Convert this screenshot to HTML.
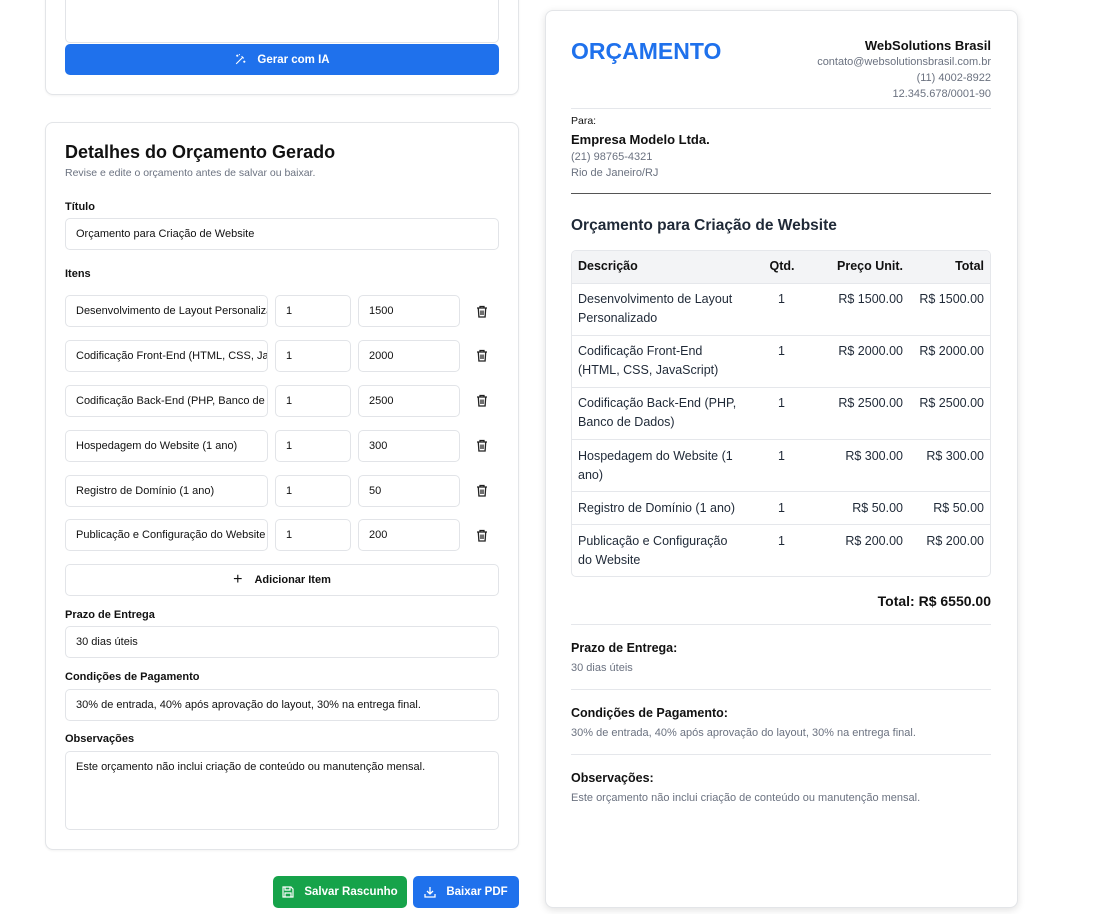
<!DOCTYPE html>
<html><head><meta charset="utf-8"><style>
*{box-sizing:border-box;margin:0;padding:0}
body{width:1097px;height:914px;background:#fff;font-family:"Liberation Sans",Arial,sans-serif;color:#111827;position:relative;overflow:hidden}
.a{position:absolute}
.card{position:absolute;background:#fff;border:1px solid #e3e5e8;border-radius:8px;box-shadow:0 1px 2px rgba(0,0,0,.05)}
.inp{position:absolute;border:1px solid #e2e4e8;border-radius:5px;background:#fff;font-size:11px;color:#111;padding-left:10px;display:flex;align-items:center;white-space:nowrap;overflow:hidden}
.lbl{position:absolute;font-size:11px;font-weight:bold;color:#111}
.tr{position:absolute;left:476px;width:12px;height:13px}
.btn{position:absolute;border-radius:5px;color:#fff;font-size:11.5px;font-weight:bold;display:flex;align-items:center;justify-content:center;gap:10px}
.t{position:absolute;font-size:12.5px;color:#1f2937;line-height:19px}
.r{text-align:right}
.hl{position:absolute;left:571px;width:420px;height:1px;background:#e5e7eb}
.sm{position:absolute;font-size:11px;color:#6b7280}
</style></head><body>

<div class="card" style="left:45px;top:-10px;width:474px;height:105px"></div>
<div class="a" style="left:65px;top:-5px;width:434px;height:48px;border:1px solid #e2e4e8;border-radius:5px"></div>
<div class="btn" style="left:65px;top:44px;width:434px;height:31px;background:#1f71ec"><svg width="13" height="13" viewBox="0 0 24 24" fill="none" stroke="#fff" stroke-width="2"><path d="M4 20L16 8M14 6l4 4M6 3v4M4 5h4M19 14v4M17 16h4M10 2v2"/></svg>Gerar com IA</div>

<div class="card" style="left:45px;top:122px;width:474px;height:728px"></div>
<div class="a" style="left:65px;top:142px;font-size:18px;font-weight:bold;color:#111">Detalhes do Orçamento Gerado</div>
<div class="a" style="left:65px;top:167px;font-size:10.5px;color:#6b7280">Revise e edite o orçamento antes de salvar ou baixar.</div>
<div class="lbl" style="left:65px;top:201px">Título</div>
<div class="inp" style="left:65px;top:218px;width:434px;height:32px">Orçamento para Criação de Website</div>
<div class="lbl" style="left:65px;top:268px">Itens</div>

<div class="inp" style="left:65px;top:295px;width:203px;height:32px">Desenvolvimento de Layout Personalizado</div>
<div class="inp" style="left:275px;top:295px;width:76px;height:32px">1</div>
<div class="inp" style="left:358px;top:295px;width:102px;height:32px">1500</div>
<div class="inp" style="left:65px;top:340px;width:203px;height:32px">Codificação Front-End (HTML, CSS, JavaScript)</div>
<div class="inp" style="left:275px;top:340px;width:76px;height:32px">1</div>
<div class="inp" style="left:358px;top:340px;width:102px;height:32px">2000</div>
<div class="inp" style="left:65px;top:385px;width:203px;height:32px">Codificação Back-End (PHP, Banco de Dados)</div>
<div class="inp" style="left:275px;top:385px;width:76px;height:32px">1</div>
<div class="inp" style="left:358px;top:385px;width:102px;height:32px">2500</div>
<div class="inp" style="left:65px;top:430px;width:203px;height:32px">Hospedagem do Website (1 ano)</div>
<div class="inp" style="left:275px;top:430px;width:76px;height:32px">1</div>
<div class="inp" style="left:358px;top:430px;width:102px;height:32px">300</div>
<div class="inp" style="left:65px;top:475px;width:203px;height:32px">Registro de Domínio (1 ano)</div>
<div class="inp" style="left:275px;top:475px;width:76px;height:32px">1</div>
<div class="inp" style="left:358px;top:475px;width:102px;height:32px">50</div>
<div class="inp" style="left:65px;top:519px;width:203px;height:32px">Publicação e Configuração do Website</div>
<div class="inp" style="left:275px;top:519px;width:76px;height:32px">1</div>
<div class="inp" style="left:358px;top:519px;width:102px;height:32px">200</div>

<svg class="tr" style="top:305px" viewBox="0 0 12 13" fill="none" stroke="#222" stroke-width="1.3"><path d="M1 3h10M4 3V1.5h4V3M2.3 3l.6 9h6.2l.6-9M5 5.5v4.5M7 5.5v4.5"/></svg>
<svg class="tr" style="top:349px" viewBox="0 0 12 13" fill="none" stroke="#222" stroke-width="1.3"><path d="M1 3h10M4 3V1.5h4V3M2.3 3l.6 9h6.2l.6-9M5 5.5v4.5M7 5.5v4.5"/></svg>
<svg class="tr" style="top:394px" viewBox="0 0 12 13" fill="none" stroke="#222" stroke-width="1.3"><path d="M1 3h10M4 3V1.5h4V3M2.3 3l.6 9h6.2l.6-9M5 5.5v4.5M7 5.5v4.5"/></svg>
<svg class="tr" style="top:439px" viewBox="0 0 12 13" fill="none" stroke="#222" stroke-width="1.3"><path d="M1 3h10M4 3V1.5h4V3M2.3 3l.6 9h6.2l.6-9M5 5.5v4.5M7 5.5v4.5"/></svg>
<svg class="tr" style="top:484px" viewBox="0 0 12 13" fill="none" stroke="#222" stroke-width="1.3"><path d="M1 3h10M4 3V1.5h4V3M2.3 3l.6 9h6.2l.6-9M5 5.5v4.5M7 5.5v4.5"/></svg>
<svg class="tr" style="top:529px" viewBox="0 0 12 13" fill="none" stroke="#222" stroke-width="1.3"><path d="M1 3h10M4 3V1.5h4V3M2.3 3l.6 9h6.2l.6-9M5 5.5v4.5M7 5.5v4.5"/></svg>

<div class="inp" style="left:65px;top:564px;width:434px;height:32px;justify-content:center;font-weight:bold;padding:0;gap:12px"><span style="font-size:16px;font-weight:normal">+</span>Adicionar Item</div>
<div class="lbl" style="left:65px;top:609px">Prazo de Entrega</div>
<div class="inp" style="left:65px;top:626px;width:434px;height:32px">30 dias úteis</div>
<div class="lbl" style="left:65px;top:671px">Condições de Pagamento</div>
<div class="inp" style="left:65px;top:689px;width:434px;height:32px">30% de entrada, 40% após aprovação do layout, 30% na entrega final.</div>
<div class="lbl" style="left:65px;top:733px">Observações</div>
<div class="inp" style="left:65px;top:751px;width:434px;height:79px;align-items:flex-start;padding-top:9px">Este orçamento não inclui criação de conteúdo ou manutenção mensal.</div>

<div class="btn" style="left:273px;top:876px;width:134px;height:32px;background:#16a34a"><svg width="12" height="12" viewBox="0 0 12 12" fill="none" stroke="#fff" stroke-width="1.2"><path d="M1 1h8l2 2v8H1zM3 1v3h5V1M3 11V7h6v4"/></svg>Salvar Rascunho</div>
<div class="btn" style="left:413px;top:876px;width:106px;height:32px;background:#1f71ec"><svg width="12" height="12" viewBox="0 0 12 12" fill="none" stroke="#fff" stroke-width="1.3"><path d="M6 1v7M3 5l3 3 3-3M1 8v3h10V8"/></svg>Baixar PDF</div>

<div class="card" style="left:545px;top:10px;width:473px;height:898px;box-shadow:0 2px 8px rgba(0,0,0,.12)"></div>
<div class="a" style="left:571px;top:38px;font-size:23px;font-weight:bold;color:#1f71ec">ORÇAMENTO</div>
<div class="a r" style="left:700px;width:291px;top:38px;font-size:13px;font-weight:bold;color:#111">WebSolutions Brasil</div>
<div class="sm r" style="left:700px;width:291px;top:56px">contato@websolutionsbrasil.com.br</div>
<div class="sm r" style="left:700px;width:291px;top:72px">(11) 4002-8922</div>
<div class="sm r" style="left:700px;width:291px;top:88px">12.345.678/0001-90</div>
<div class="hl" style="top:108px"></div>
<div class="a" style="left:571px;top:115px;font-size:10.5px;color:#111">Para:</div>
<div class="a" style="left:571px;top:132px;font-size:13px;font-weight:bold;color:#111">Empresa Modelo Ltda.</div>
<div class="sm" style="left:571px;top:151px">(21) 98765-4321</div>
<div class="sm" style="left:571px;top:167px">Rio de Janeiro/RJ</div>
<div class="a" style="left:571px;top:193px;width:420px;height:1px;background:#555"></div>
<div class="a" style="left:571px;top:217px;font-size:15.5px;font-weight:bold;color:#1f2937">Orçamento para Criação de Website</div>

<div class="a" style="left:571px;top:250px;width:420px;height:327px;border:1px solid #e5e7eb;border-radius:5px;overflow:hidden">
<div class="a" style="left:0;top:0;width:420px;height:33px;background:#f3f4f6;border-bottom:1px solid #e5e7eb"></div>
<div class="a" style="left:0;top:84px;width:420px;height:1px;background:#e5e7eb"></div>
<div class="a" style="left:0;top:136px;width:420px;height:1px;background:#e5e7eb"></div>
<div class="a" style="left:0;top:188px;width:420px;height:1px;background:#e5e7eb"></div>
<div class="a" style="left:0;top:240px;width:420px;height:1px;background:#e5e7eb"></div>
<div class="a" style="left:0;top:273px;width:420px;height:1px;background:#e5e7eb"></div>
</div>
<div class="t" style="left:578px;top:257px;font-weight:bold;color:#111">Descrição</div>
<div class="t" style="left:760px;width:44px;top:257px;font-weight:bold;color:#111;text-align:center">Qtd.</div>
<div class="t r" style="left:800px;width:103px;top:257px;font-weight:bold;color:#111">Preço Unit.</div>
<div class="t r" style="left:900px;width:84px;top:257px;font-weight:bold;color:#111">Total</div>

<div class="t" style="left:578px;top:290px">Desenvolvimento de Layout<br>Personalizado</div>
<div class="t" style="left:578px;top:342px">Codificação Front-End<br>(HTML, CSS, JavaScript)</div>
<div class="t" style="left:578px;top:394px">Codificação Back-End (PHP,<br>Banco de Dados)</div>
<div class="t" style="left:578px;top:447px">Hospedagem do Website (1<br>ano)</div>
<div class="t" style="left:578px;top:499px">Registro de Domínio (1 ano)</div>
<div class="t" style="left:578px;top:532px">Publicação e Configuração<br>do Website</div>

<div class="t" style="left:778px;top:290px">1</div><div class="t" style="left:778px;top:342px">1</div><div class="t" style="left:778px;top:394px">1</div><div class="t" style="left:778px;top:447px">1</div><div class="t" style="left:778px;top:499px">1</div><div class="t" style="left:778px;top:532px">1</div>

<div class="t r" style="left:800px;width:103px;top:290px">R$ 1500.00</div><div class="t r" style="left:900px;width:84px;top:290px">R$ 1500.00</div>
<div class="t r" style="left:800px;width:103px;top:342px">R$ 2000.00</div><div class="t r" style="left:900px;width:84px;top:342px">R$ 2000.00</div>
<div class="t r" style="left:800px;width:103px;top:394px">R$ 2500.00</div><div class="t r" style="left:900px;width:84px;top:394px">R$ 2500.00</div>
<div class="t r" style="left:800px;width:103px;top:447px">R$ 300.00</div><div class="t r" style="left:900px;width:84px;top:447px">R$ 300.00</div>
<div class="t r" style="left:800px;width:103px;top:499px">R$ 50.00</div><div class="t r" style="left:900px;width:84px;top:499px">R$ 50.00</div>
<div class="t r" style="left:800px;width:103px;top:532px">R$ 200.00</div><div class="t r" style="left:900px;width:84px;top:532px">R$ 200.00</div>

<div class="a r" style="left:700px;width:291px;top:593px;font-size:14px;font-weight:bold;color:#111">Total: R$ 6550.00</div>
<div class="hl" style="top:624px"></div>
<div class="a" style="left:571px;top:641px;font-size:12.5px;font-weight:bold;color:#111">Prazo de Entrega:</div>
<div class="sm" style="left:571px;top:662px">30 dias úteis</div>
<div class="hl" style="top:689px"></div>
<div class="a" style="left:571px;top:706px;font-size:12.5px;font-weight:bold;color:#111">Condições de Pagamento:</div>
<div class="sm" style="left:571px;top:727px">30% de entrada, 40% após aprovação do layout, 30% na entrega final.</div>
<div class="hl" style="top:754px"></div>
<div class="a" style="left:571px;top:771px;font-size:12.5px;font-weight:bold;color:#111">Observações:</div>
<div class="sm" style="left:571px;top:792px">Este orçamento não inclui criação de conteúdo ou manutenção mensal.</div>
</body></html>
